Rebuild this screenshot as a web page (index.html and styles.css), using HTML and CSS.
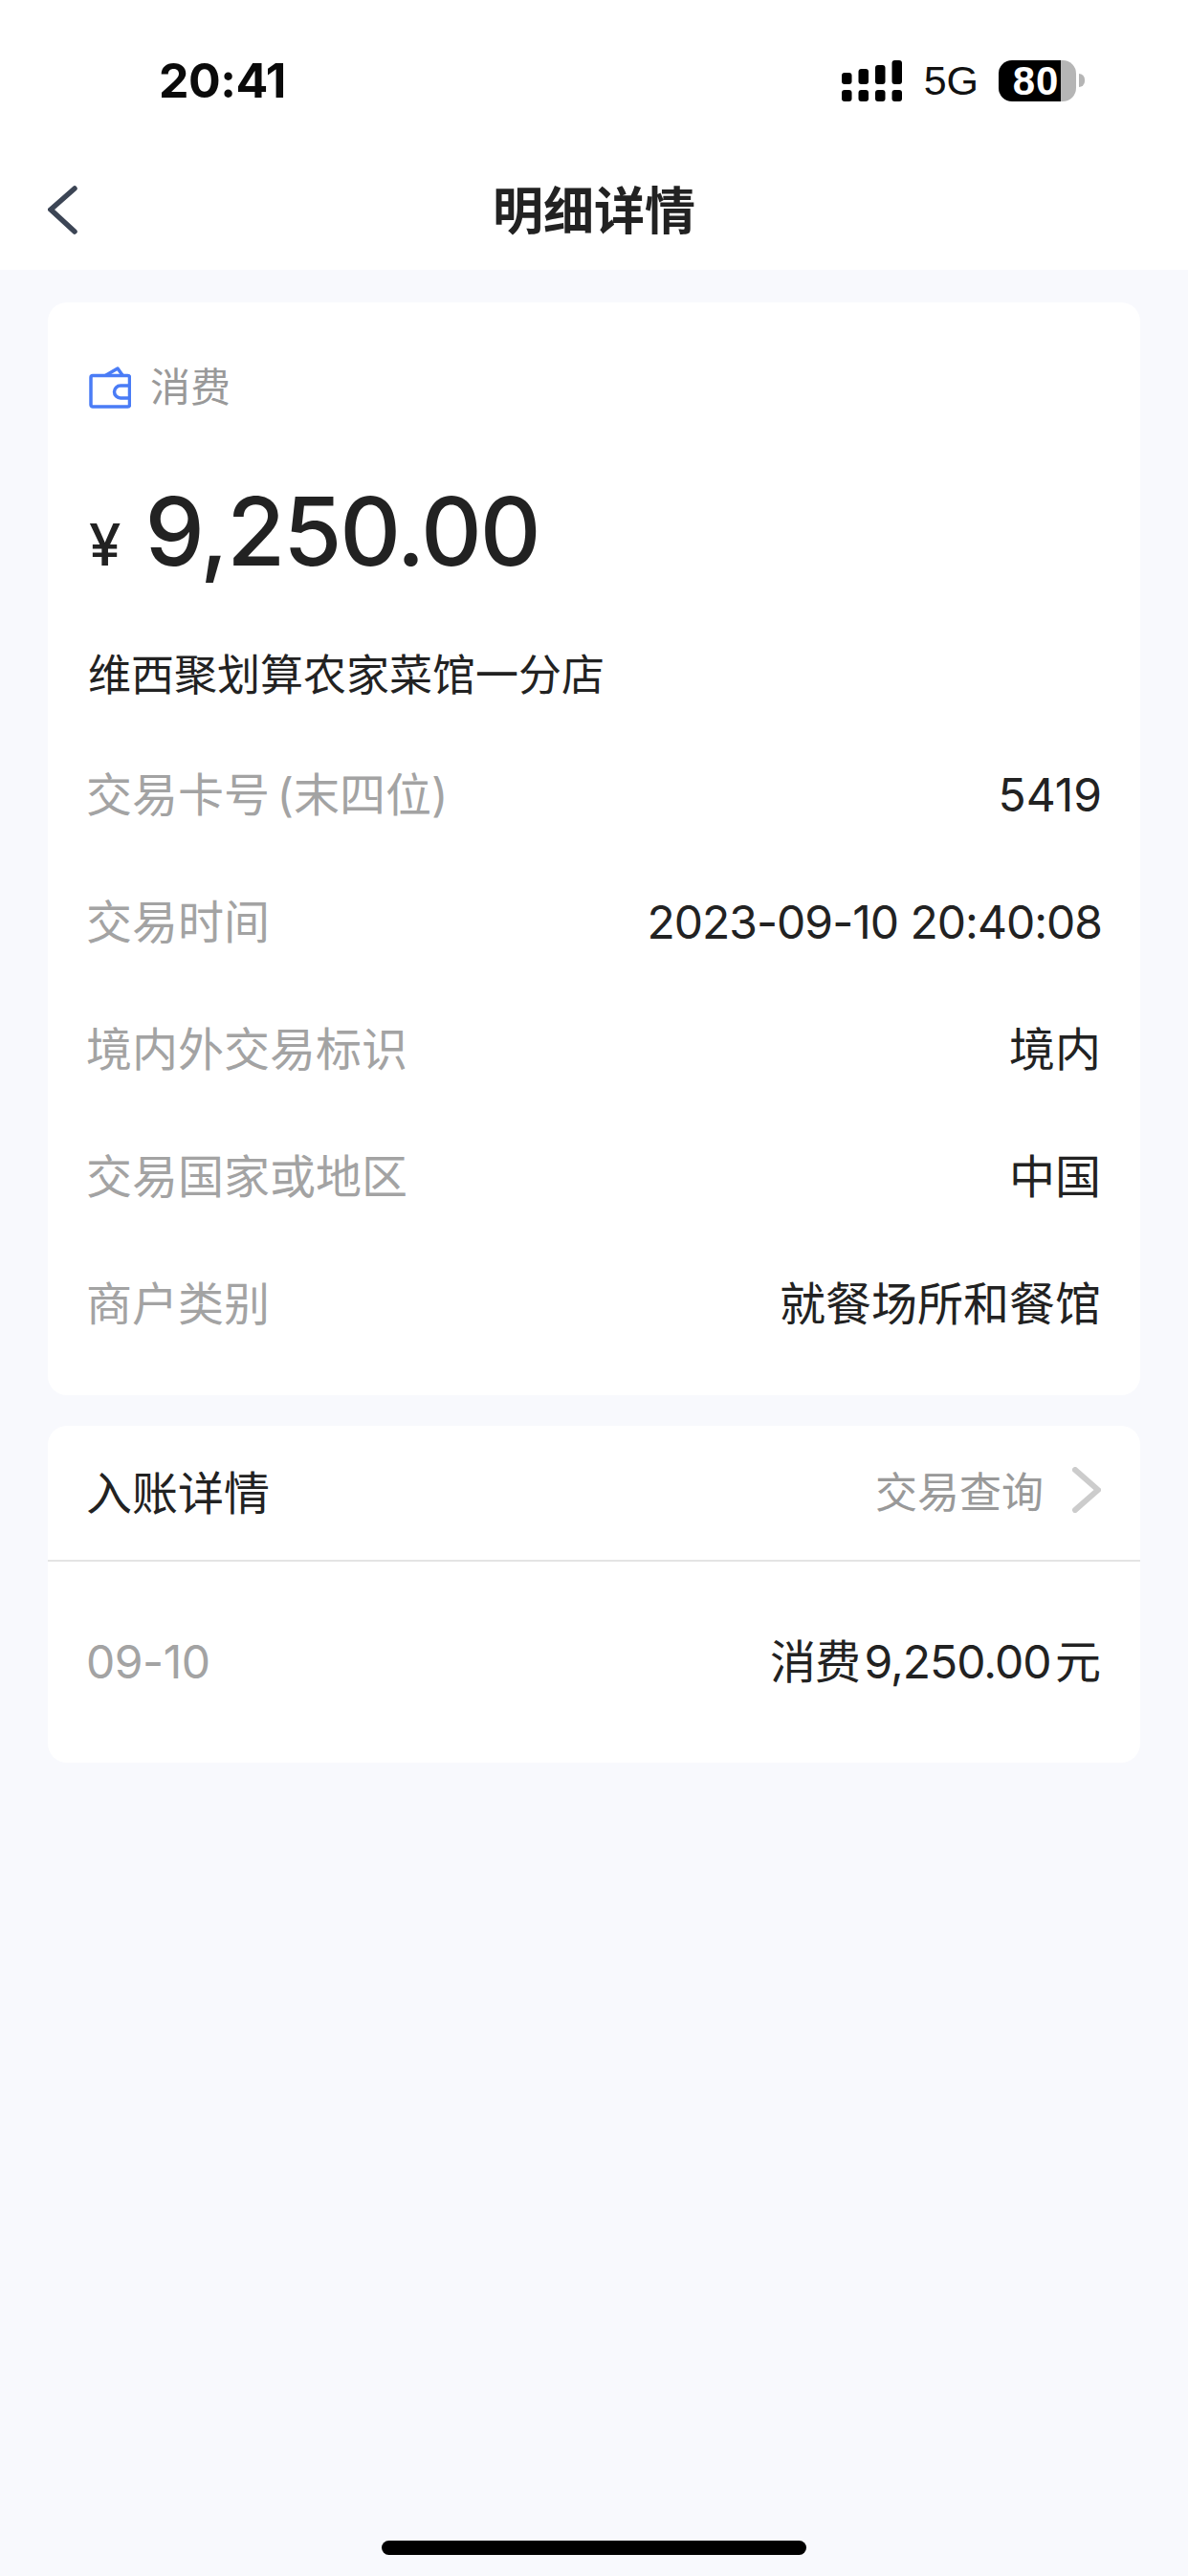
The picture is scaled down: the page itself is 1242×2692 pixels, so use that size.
FILE: index.html
```html
<!DOCTYPE html>
<html lang="zh-CN">

<head>
    <meta charset="UTF-8" />
    <meta name="viewport" content="width=device-width, initial-scale=1.0" />
    <title>明细详情</title>
    <link rel="stylesheet" href="styles.css">
</head>

<body>
    <div class="page">
        <header class="top">
            <div class="status-bar">
                <span class="time">20:41</span>
                <div class="status-right">
                    <svg class="signal" width="63" height="43" viewBox="0 0 63 43">
                        <rect x="0" y="13" width="10.5" height="12" rx="3" />
                        <rect x="17.5" y="9" width="10.5" height="16" rx="3" />
                        <rect x="35" y="5" width="10.5" height="20" rx="3" />
                        <rect x="52.5" y="0" width="10.5" height="25" rx="3" />
                        <rect x="0" y="31" width="10.5" height="12" rx="3" />
                        <rect x="17.5" y="31" width="10.5" height="12" rx="3" />
                        <rect x="35" y="31" width="10.5" height="12" rx="3" />
                        <rect x="52.5" y="31" width="10.5" height="12" rx="3" />
                    </svg>
                    <span class="net">5G</span>
                    <div class="battery">
                        <div class="battery-body"><span class="battery-level">80</span></div>
                        <div class="battery-nub"></div>
                    </div>
                </div>
            </div>
            <nav class="nav-bar">
                <svg class="back" width="34" height="52" viewBox="0 0 34 52">
                    <path d="M28 4 L3 26 L28 49" />
                </svg>
                <h1 class="nav-title">明细详情</h1>
            </nav>
        </header>

        <main class="content">
            <section class="card detail-card">
                <div class="type-row">
                    <svg class="wallet" width="44" height="44" viewBox="0 0 44 44">
                        <path d="M18 9 L30 2 L35 9" />
                        <rect x="2" y="9.5" width="40.5" height="32.5" rx="2" />
                        <path d="M42.5 20 H33 A6.5 6.5 0 0 0 33 33 H42.5" />
                    </svg>
                    <span class="type-label">消费</span>
                </div>
                <div class="amount-row">
                    <span class="currency">¥</span>
                    <span class="amount">9,250.00</span>
                </div>
                <div class="merchant">维西聚划算农家菜馆一分店</div>
                <div class="rows">
                    <div class="row"><span class="row-label">交易卡号 (末四位)</span><span class="row-value latin">5419</span></div>
                    <div class="row"><span class="row-label">交易时间</span><span class="row-value latin tight">2023-09-10 20:40:08</span></div>
                    <div class="row"><span class="row-label">境内外交易标识</span><span class="row-value">境内</span></div>
                    <div class="row"><span class="row-label">交易国家或地区</span><span class="row-value">中国</span></div>
                    <div class="row"><span class="row-label">商户类别</span><span class="row-value">就餐场所和餐馆</span></div>
                </div>
            </section>

            <section class="card posting-card">
                <div class="posting-head">
                    <span class="posting-title">入账详情</span>
                    <div class="posting-link">
                        <span>交易查询</span>
                        <svg class="chevron" width="30" height="48" viewBox="0 0 30 48">
                            <path d="M3 3 L27 24 L3 45" />
                        </svg>
                    </div>
                </div>
                <div class="row posting-row">
                    <span class="row-label posting-date">09-10</span>
                    <span class="row-value posting-value">消费 9,250.00 元</span>
                </div>
            </section>
        </main>

        <div class="home-indicator"></div>
    </div>
</body>

</html>
```

FILE: styles.css
```css
body {
    margin: 0;
    background: #f8f9fd;
    color: #222;
    font-family: Inter, "Noto Sans CJK SC", sans-serif;
}

.page {
    display: flex;
    flex-direction: column;
    width: 1242px;
    height: 2692px;
    overflow: hidden;
}

.top {
    background: #fff;
    height: 282px;
}

.status-bar {
    display: flex;
    justify-content: space-between;
    align-items: center;
    height: 168px;
    padding: 0 108px 0 166px;
    box-sizing: border-box;
}

.time {
    font-size: 50px;
    font-weight: 700;
    letter-spacing: -0.5px;
    color: #0a0a0a;
}

.status-right {
    display: flex;
    align-items: center;
}

.signal {
    fill: #000;
    margin-right: 23px;
}

.net {
    font-family: "Liberation Sans", sans-serif;
    font-size: 43px;
    color: #111;
    margin-right: 21px;
}

.battery {
    display: flex;
    align-items: center;
    gap: 3px;
}

.battery-body {
    width: 81px;
    height: 43px;
    border-radius: 14px;
    background: linear-gradient(90deg, #000 80%, #b5b5b5 80%);
}

.battery-level {
    display: block;
    width: 78px;
    text-align: center;
    font-family: "Liberation Sans", sans-serif;
    font-weight: 700;
    font-size: 42px;
    letter-spacing: 1px;
    line-height: 43px;
    color: #fff;
}

.battery-nub {
    width: 6px;
    height: 14px;
    background: #b5b5b5;
    border-radius: 0 6px 6px 0;
}

.nav-bar {
    position: relative;
    display: flex;
    justify-content: center;
    align-items: center;
    height: 98px;
}

.nav-title {
    margin: 0;
    font-size: 53px;
    font-weight: 700;
    color: #222;
}

.back {
    position: absolute;
    left: 50px;
    top: 25px;
    fill: none;
    stroke: #3c4555;
    stroke-width: 5.5;
    stroke-linecap: round;
    stroke-linejoin: miter;
}

.content {
    display: flex;
    flex-direction: column;
    gap: 32px;
    padding: 34px 50px 0;
    flex: 1;
}

.card {
    background: #fff;
    border-radius: 20px;
}

.detail-card {
    height: 1142px;
    box-sizing: border-box;
    padding: 67px 40px 0 43px;
}

.type-row {
    display: flex;
    align-items: center;
    gap: 20px;
}

.wallet {
    fill: none;
    stroke: #4a7cf6;
    stroke-width: 3.5;
    stroke-linejoin: round;
    stroke-linecap: round;
}

.type-label {
    font-size: 42px;
    line-height: 44px;
    color: #999;
}

.amount-row {
    display: flex;
    align-items: baseline;
    gap: 25px;
    margin-top: 68px;
    height: 120px;
    line-height: 120px;
}

.currency {
    font-size: 60px;
    font-weight: 500;
    color: #222;
}

.amount {
    font-size: 99px;
    font-weight: 500;
    letter-spacing: -2px;
    color: #222;
}

.merchant {
    margin-top: 59px;
    font-size: 45px;
    line-height: 64px;
    margin-left: -1px;
    color: #222;
}

.rows {
    margin-top: 26px;
}

.row {
    display: flex;
    justify-content: space-between;
    align-items: center;
    height: 133px;
    font-size: 48px;
    line-height: 64px;
}

.row-label {
    color: #a3a3a3;
    margin-left: -3px;
    word-spacing: -6px;
}

.row-value {
    color: #222;
    margin-right: 1px;
}

.latin {
    margin-right: 0;
}

.tight {
    letter-spacing: -1px;
}

.posting-card {
    height: 352px;
}

.posting-head {
    display: flex;
    justify-content: space-between;
    align-items: center;
    height: 134px;
    padding: 0 41px 6px 40px;
    border-bottom: 2px solid #e4e4e4;
}

.posting-title {
    font-size: 48px;
    color: #222;
}

.posting-link {
    display: flex;
    align-items: center;
    gap: 30px;
    font-size: 44px;
    color: #999;
}

.chevron {
    fill: none;
    stroke: #ccc;
    stroke-width: 6;
    stroke-linecap: round;
}

.posting-row {
    height: 210px;
    padding: 0 40px 0 43px;
}

.posting-date {
    letter-spacing: -0.5px;
}

.posting-value {
    word-spacing: -8px;
    letter-spacing: -1px;
    margin-right: 2px;
}

.home-indicator {
    width: 444px;
    height: 15px;
    margin: 0 auto 22px;
    border-radius: 8px;
    background: #000;
}
```
